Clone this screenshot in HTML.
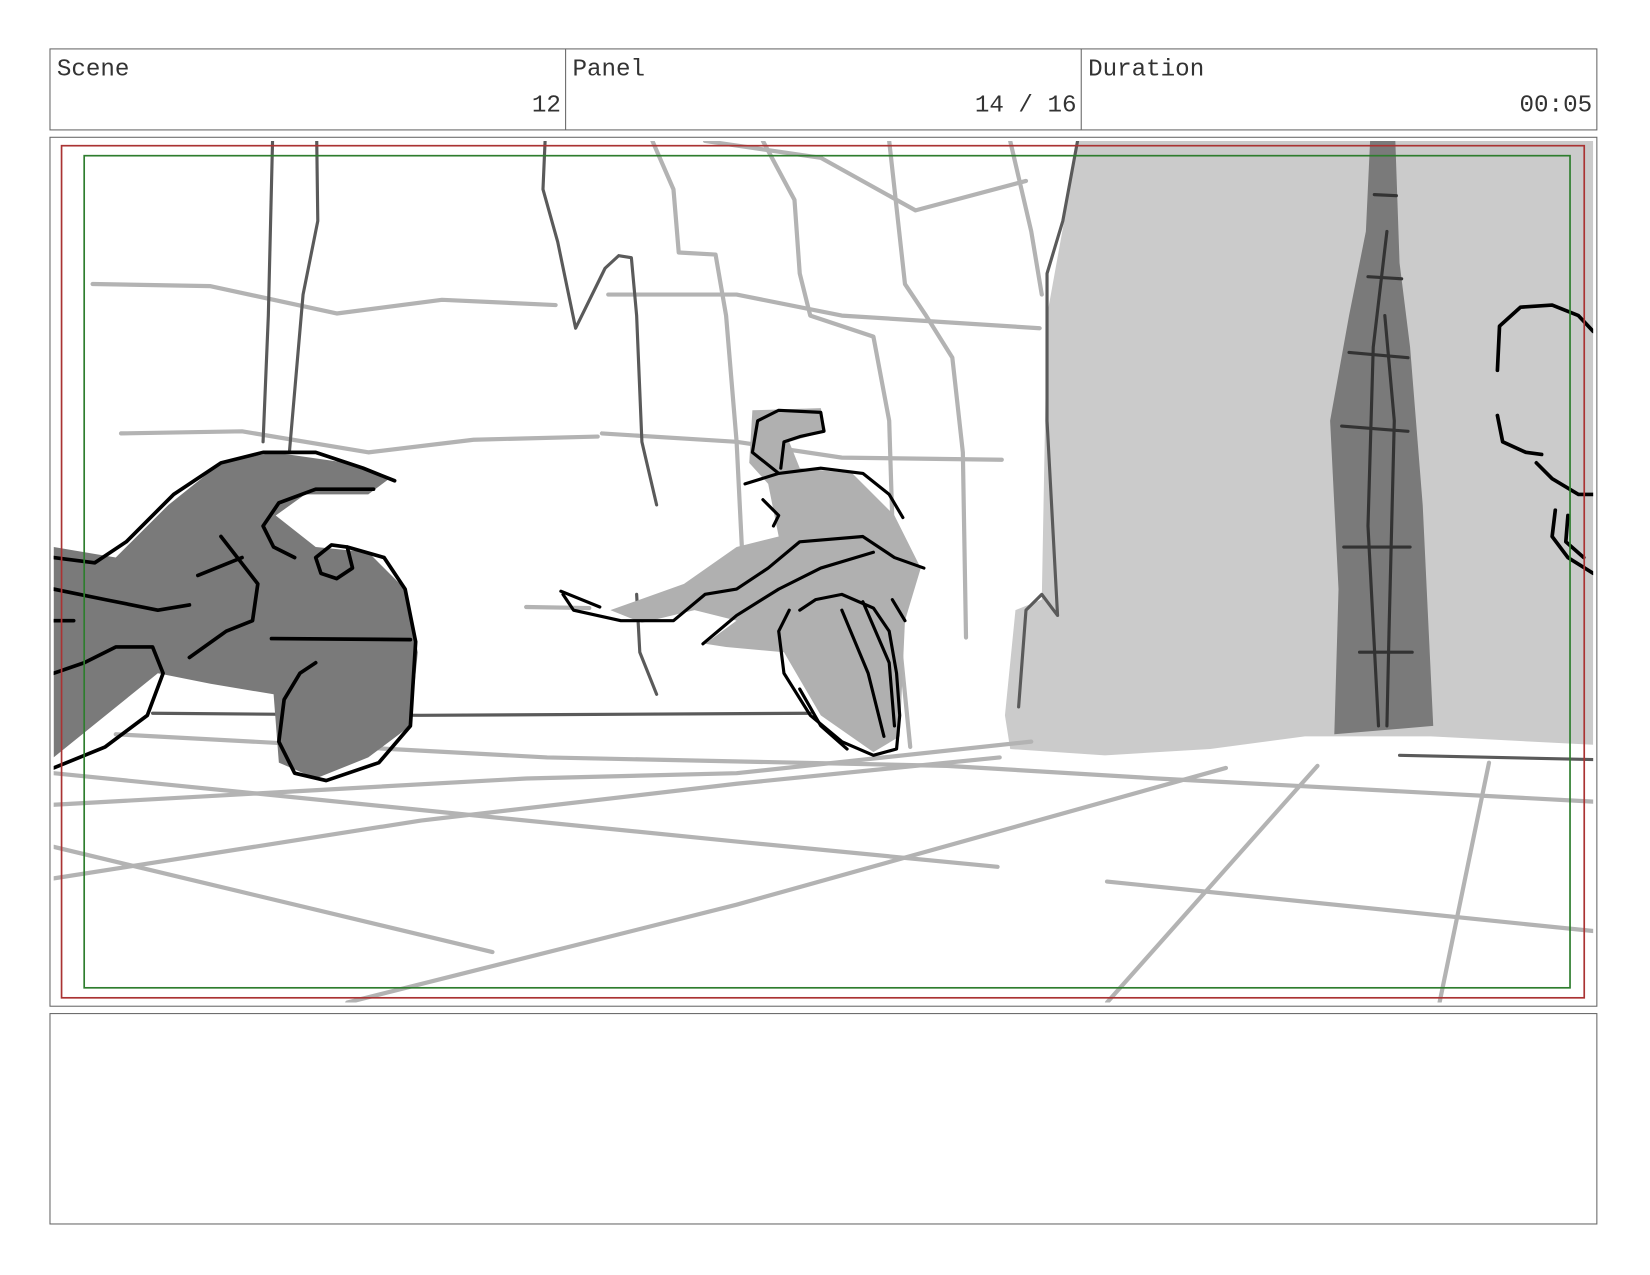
<!DOCTYPE html>
<html><head><meta charset="utf-8"><style>
html,body{margin:0;padding:0;background:#fff;width:1650px;height:1275px;overflow:hidden}
svg{display:block}
text{font-family:"Liberation Mono","DejaVu Sans Mono",monospace;font-size:23px;fill:#333}
</style></head><body>
<svg width="1650" height="1275" viewBox="0 0 1568 1212" preserveAspectRatio="none" xmlns="http://www.w3.org/2000/svg">
<rect x="0" y="0" width="1568" height="1212" fill="#fff"/>
<rect x="47.5" y="46.5" width="1470" height="77" fill="none" stroke="#666" stroke-width="1"/>
<line x1="537.5" y1="46.5" x2="537.5" y2="123.5" stroke="#666"/>
<line x1="1027.5" y1="46.5" x2="1027.5" y2="123.5" stroke="#666"/>
<text x="54" y="72">Scene</text>
<text x="533" y="106" text-anchor="end">12</text>
<text x="544" y="72">Panel</text>
<text x="1023" y="106" text-anchor="end">14 / 16</text>
<text x="1034" y="72">Duration</text>
<text x="1513" y="106" text-anchor="end">00:05</text>
<rect x="47.5" y="130.5" width="1470" height="826" fill="#fff" stroke="#666"/>
<clipPath id="c"><rect x="51" y="134" width="1463" height="819"/></clipPath>
<g clip-path="url(#c)" fill="none" stroke-linecap="round" stroke-linejoin="round">
<path d="M1025 134 L1514 134 L1514 708 L1360 700 L1240 700 L1150 712 L1050 718 L960 712 L955 680 L965 580 L990 570 L995 300 Z" fill="#cbcbcb" stroke="none"/>
<path d="M1302 134 L1326 134 L1330 250 L1340 330 L1352 480 L1362 690 L1268 698 L1272 560 L1264 400 L1282 300 L1298 220 Z" fill="#7a7a7a" stroke="none"/>
<g stroke="#333" stroke-width="3">
<path d="M1318 220 L1305 330 L1300 500 L1310 690"/>
<path d="M1316 300 L1325 400 L1320 600 L1318 690"/>
<path d="M1282 335 L1338 340 M1275 405 L1338 410 M1277 520 L1340 520 M1292 620 L1342 620 M1300 263 L1332 265 M1306 185 L1327 186"/>
</g>
<g stroke="#b3b3b3" stroke-width="4">
<path d="M88 270 L200 272 L320 298 L420 285 L528 290"/>
<path d="M578 280 L700 280 L800 300 L988 312"/>
<path d="M115 412 L230 410 L350 430 L450 418 L568 415"/>
<path d="M572 412 L700 420 L800 435 L952 437"/>
<path d="M500 577 L560 578"/>
<path d="M620 134 L640 180 L645 240 L680 242 L690 300 L700 420 L705 520"/>
<path d="M725 134 L755 190 L760 260 L770 300 L830 320 L845 400 L850 560 L865 710"/>
<path d="M845 134 L860 270 L880 300 L905 340 L915 430 L918 606"/>
<path d="M960 134 L980 220 L990 280"/>
<path d="M670 134 L780 150 L870 200 L975 172"/>
<path d="M110 698 L520 720 L900 728 L1100 740 L1514 762"/>
<path d="M51 765 L500 740 L700 735 L980 705"/>
<path d="M51 835 L400 780 L700 745 L950 720"/>
<path d="M51 735 L400 770 L700 800 L948 824"/>
<path d="M51 805 L468 905"/>
<path d="M330 953 L700 860 L1165 730"/>
<path d="M1052 953 L1252 728"/>
<path d="M1368 953 L1415 725"/>
<path d="M1052 838 L1514 885"/>
</g>
<g stroke="#5a5a5a" stroke-width="3">
<path d="M259 134 L255 300 L250 420"/>
<path d="M301 134 L302 210 L288 280 L275 430"/>
<path d="M518 134 L516 180 L530 230 L547 312 L575 255 L588 243 L600 245 L605 300 L610 420 L624 480"/>
<path d="M605 565 L608 620 L624 660"/>
<path d="M1024 134 L1010 210 L995 260 L995 400 L1005 585 L990 565 L975 580 L968 672"/>
<path d="M145 678 L400 680 L770 678"/>
<path d="M1330 718 L1514 722"/>
</g>
<path d="M51 520 L110 530 L160 480 L210 440 L260 430 L330 440 L370 455 L350 470 L290 470 L262 490 L300 520 L350 525 L385 560 L397 620 L390 690 L350 720 L300 740 L265 725 L260 660 L200 650 L150 640 L51 720 Z" fill="#7a7a7a" stroke="none"/>
<g stroke="#000" stroke-width="3.5">
<path d="M51 530 L90 535 L120 515 L165 470 L210 440 L250 430 L300 430 L345 445 L375 457"/>
<path d="M355 465 L300 465 L265 478 L250 500 L260 520 L280 530"/>
<path d="M51 560 L100 570 L150 580 L180 575"/>
<path d="M188 547 L230 530"/>
<path d="M210 510 L245 555 L240 590 L215 600 L180 625"/>
<path d="M330 520 L365 530 L385 560 L395 610 L390 690 L360 725 L310 742 L280 735 L265 705 L270 665 L285 640 L300 630"/>
<path d="M258 607 L390 608"/>
<path d="M51 730 L100 710 L140 680 L155 640 L145 615 L110 615 L80 630 L51 640"/>
<path d="M51 590 L70 590"/>
<path d="M300 530 L305 545 L320 550 L335 540 L330 520 L315 518 Z"/>
</g>
<path d="M715 390 L780 388 L785 410 L750 420 L760 445 L810 450 L850 490 L875 540 L860 590 L855 700 L830 715 L780 680 L745 620 L690 615 L670 612 L700 590 L660 580 L610 592 L580 580 L650 555 L700 520 L740 510 L730 460 L712 440 Z" fill="#b0b0b0" stroke="none"/>
<g stroke="#000" stroke-width="3">
<path d="M740 450 L715 430 L720 400 L740 390 L780 392 L783 410 L760 415 L745 420 L742 445"/>
<path d="M708 460 L740 450 L780 445 L820 450 L845 470 L858 492"/>
<path d="M535 565 L545 580 L590 590 L640 590 L670 565 L700 560 L730 540 L760 515 L820 510 L850 530 L878 540"/>
<path d="M533 562 L570 577"/>
<path d="M668 612 L700 585 L740 560 L780 540 L830 525"/>
<path d="M750 580 L740 600 L745 640 L770 680 L800 705 L830 718 L852 712 L855 680 L852 640 L845 600 L830 578 L800 565 L775 570 L760 580"/>
<path d="M760 655 L780 690 L805 712"/>
<path d="M800 580 L825 640 L840 700"/>
<path d="M820 572 L845 630 L850 690"/>
<path d="M848 570 L860 590"/>
<path d="M725 475 L740 490 L735 500"/>
</g>
<g stroke="#000" stroke-width="3.5">
<path d="M1423 352 L1425 310 L1445 292 L1475 290 L1500 300 L1514 315"/>
<path d="M1423 395 L1428 420 L1450 430 L1465 432"/>
<path d="M1460 440 L1475 455 L1500 470 L1514 470"/>
<path d="M1478 485 L1475 510 L1490 530 L1514 545"/>
<path d="M1490 490 L1488 515 L1505 530"/>
</g>
</g>
<rect x="58.5" y="138.5" width="1447" height="810" fill="none" stroke="#a33" stroke-width="1.6"/>
<rect x="80" y="148" width="1412" height="791" fill="none" stroke="#2e7d2e" stroke-width="1.6"/>
<rect x="47.5" y="963.5" width="1470" height="200" fill="none" stroke="#666"/>
</svg>
</body></html>
